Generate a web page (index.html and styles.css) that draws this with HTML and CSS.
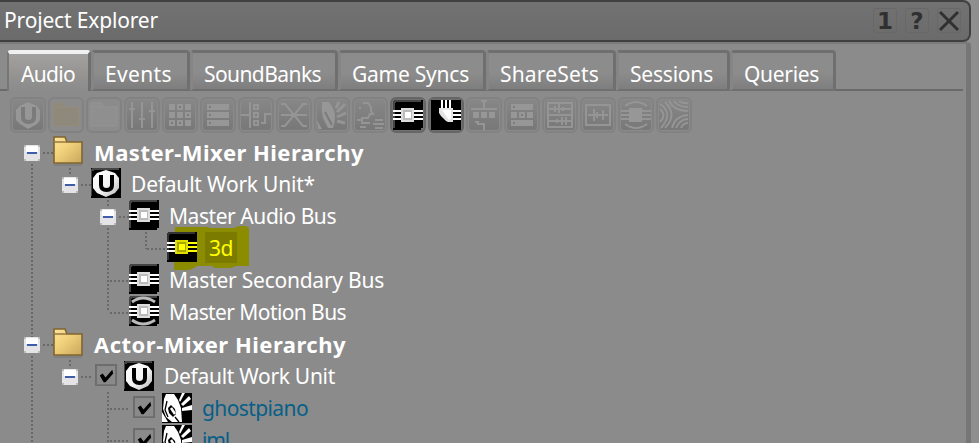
FILE: index.html
```html
<!DOCTYPE html>
<html lang="en">
<head>
<meta charset="utf-8">
<title>Project Explorer</title>
<link rel="stylesheet" href="styles.css">
</head>
<body>
<svg class="defs" width="0" height="0">
  <defs>
    <linearGradient id="gold" x1="0" y1="0" x2="1" y2="1"><stop offset="0" stop-color="#fbe39b"/><stop offset=".4" stop-color="#f3d27d"/><stop offset="1" stop-color="#c7a75c"/></linearGradient>
    <linearGradient id="shield" x1="0" y1="0" x2="1" y2="1"><stop offset="0" stop-color="#fff"/><stop offset=".55" stop-color="#f4f4f4"/><stop offset="1" stop-color="#b5b5b5"/></linearGradient>
  </defs>
  <symbol id="folder" viewBox="0 0 30 30"><path d="M1 27V1h11l2 5h15v21z" fill="url(#gold)" stroke="#80642f" stroke-width="1.6"/><path d="M2 6h12" stroke="#8d713a" stroke-width="1.4"/><path d="M1 29h28" stroke="#777" stroke-width="1"/></symbol>
  <symbol id="unit" viewBox="0 0 30 30"><path d="M0 0h30v30H0z" fill="#000"/><path d="M0 28V2h2V1h26" fill="none" stroke="#444" stroke-width="2"/><path d="M15 2l9 3 4 5v10l-4 5-9 4-9-4-4-5V10l4-5z" fill="url(#shield)"/><path d="M10 7v10q0 5 5.500 5t5.500-5V7" fill="none" stroke="#000" stroke-width="4"/></symbol>
  <symbol id="bus" viewBox="0 0 30 30"><path d="M0 2h2V0h28v28h-2v2H0z" fill="#000"/><path d="M1 28V2h1V1h26" fill="none" stroke="#444" stroke-width="2"/><path d="M0 11h30M0 15h30M0 19h30" stroke="#fff" stroke-width="2"/><path d="M8 8h13v14H8z" fill="#ddd"/><path d="M10 10h9v10h-9z" fill="#bbb"/><path d="M12 12h6v6h-6z" fill="#fff"/></symbol>
  <symbol id="bus-lit" viewBox="0 0 30 30"><path d="M0 2h2V0h28v30H0z" fill="#000"/><path d="M1 28V2h1V1h26" fill="none" stroke="#333" stroke-width="2"/><path d="M0 11h8M0 15h8M0 19h8" stroke="#fff" stroke-width="2"/><path d="M20 11h10M20 15h10M20 19h10" stroke="#ff0" stroke-width="2"/><path d="M8 8h13v14H8z" fill="#e0e000"/><path d="M10 10h9v10h-9z" fill="#a8a800"/><path d="M12 12h6v6h-6z" fill="#ff0"/></symbol>
  <symbol id="motion" viewBox="0 0 30 30"><use href="#bus"/><path d="M3 6q11-8 23 0M3 24q11 8 23 0" fill="none" stroke="#bbb" stroke-width="2.800"/></symbol>
  <symbol id="sound" viewBox="0 0 30 30"><path d="M0 0h30v30H0z" fill="#000"/><path d="M4 1h8l4 6 3 8 1 14H10L4 24 1 16 2 6z" fill="#fff"/><path d="M6 15l3-3 4 4 1 5-3 3-4-4z" fill="#000"/><path d="M9 15l4 6" stroke="#fff" stroke-width="2.500"/><path d="M5 8l-2 9 3 7M13 24l4 5" stroke="#000" stroke-width="1.300" fill="none"/><path d="M17 7l3-7h3l-5 9zM19 11l8-8 2 3-8 7zM20 15l10-3v5l-10 1z" fill="#fff"/><path d="M0 19l6 10H0z" fill="#fff"/></symbol>
  <symbol id="plug" viewBox="0 0 30 30"><path d="M0 0h30v30H0z" fill="#000"/><path d="M11 0v8M15 0v8M19 0v8M20 11h10M20 15h10M20 19h10" stroke="#fff" stroke-width="2"/><path d="M8 8h14v14h-5l-2-1-3-3-2-2-2-3z" fill="#e4e4e4"/><path d="M11 10h9v8l-2 2z" fill="#fff"/></symbol>
  <symbol id="check" viewBox="0 0 24 24"><path d="M1 1h21v21H1z" fill="#8a8a8a" stroke="#6d6d6d" stroke-width="2"/><path d="M5 12l3-2 3 4 7-8 1 4-8 9H9z" fill="#000"/></symbol>
  <symbol id="minus" viewBox="0 0 18 18"><path d="M1 1h16v16H1z" fill="#e4e4e7"/><path d="M1 1h2v2H1zM15 1h2v2h-2zM1 15h2v2H1zM15 15h2v2h-2z" fill="#b9b9b9"/><path d="M3 2h12v6H3z" fill="#fff"/><path d="M4 9h10" stroke="#3f5ca8" stroke-width="2"/></symbol>
</svg>

<header class="titlebar">
  <h1 data-width="153">Project Explorer</h1>
  <div class="controls">
    <span class="control">1</span>
    <span class="control">?</span>
    <span class="control"><svg width="22" height="22" viewBox="0 0 22 22"><path d="M2 2l18 18M20 2L2 20" stroke="#303030" stroke-width="3"/></svg></span>
  </div>
</header>

<main class="panel">
  <nav class="tabs">
    <span class="tab audio active"><b data-width="53">Audio</b></span>
    <span class="tab events"><b data-width="66">Events</b></span>
    <span class="tab banks"><b data-width="116">SoundBanks</b></span>
    <span class="tab syncs"><b data-width="116">Game Syncs</b></span>
    <span class="tab sets"><b data-width="98">ShareSets</b></span>
    <span class="tab sessions"><b data-width="82">Sessions</b></span>
    <span class="tab queries"><b data-width="74">Queries</b></span>
  </nav>

  <div class="toolbar">
    <span class="tool"><svg viewBox="0 0 30 30"><path class="f" d="M15 2l9 4 3 4v10l-3 4-9 5-8-5-4-4V10l4-4z"/><path class="cut" d="M10 7v10q0 5 5.500 5t5.500-5V7" stroke-width="4"/></svg></span>
    <span class="tool bare tan"><svg viewBox="0 0 30 30"><path d="M2 26V3h10l2 4h14v19z"/><path d="M2 7h12"/></svg></span>
    <span class="tool bare"><svg viewBox="0 0 30 30"><path d="M2 26V3h10l2 4h14v19z"/><path d="M2 7h12"/></svg></span>
    <span class="tool"><svg viewBox="0 0 30 30"><path d="M5 2v26M15 2v26M25 2v26M2 9h6M12 19h6M22 11h6"/></svg></span>
    <span class="tool"><svg viewBox="0 0 30 30"><path class="f" d="M4 4h6v6H4zM12 4h6v6h-6zM20 4h6v6h-6zM4 12h6v6H4zM12 12h6v6h-6zM20 12h6v6h-6zM4 20h6v6H4zM12 20h6v6h-6zM20 20h6v6h-6z"/><path class="cut" d="M14 7h2M22 15h2M6 23h2M14 23h2"/></svg></span>
    <span class="tool"><svg viewBox="0 0 30 30"><path class="f" d="M4 4h22v6H4zM4 12h22v6H4zM4 20h22v6H4z"/><path class="cut" d="M6 7h2M6 15h2M6 23h2"/></svg></span>
    <span class="tool"><svg viewBox="0 0 30 30"><path d="M9 2v26M0 15h9M13 5h4v4h-4zM13 13h4v4h-4zM13 21h4v4h-4zM20 23h4v-9h6"/></svg></span>
    <span class="tool"><svg viewBox="0 0 30 30"><path d="M2 4h4l18 22h4M2 26h4L24 4h4M2 15h26"/></svg></span>
    <span class="tool"><svg viewBox="0 0 30 30"><path class="f" d="M5 2h7q6 8 6 14 0 7-2 12h-5L6 18q-2-8-1-16zM0 20l5 9H1z"/><path class="cut" d="M8 12l7 13"/><path d="M19 8l3-6M20 12l8-8M20 17l9-4M20 21l8 2" stroke-width="3"/></svg></span>
    <span class="tool"><svg viewBox="0 0 30 30"><path d="M4 8h2M8 3h5l3 4v4l2 3h-3l-2 4H6M2 20h5v3h8M5 27h6M20 20h8M18 24h11M20 28h8"/></svg></span>
    <span class="tool on"><svg viewBox="0 0 30 30"><use href="#bus"/></svg></span>
    <span class="tool on"><svg viewBox="0 0 30 30"><use href="#plug"/></svg></span>
    <span class="tool"><svg viewBox="0 0 30 30"><path d="M12 1h6M15 0v9M2 9h26M6 22h3v2h6v6"/><path class="f" d="M4 12h6v6H4zM12 12h6v6h-6zM20 12h6v6h-6z"/></svg></span>
    <span class="tool"><svg viewBox="0 0 30 30"><path class="f" d="M4 4h22v6H4zM4 12h6v6H4zM12 12h6v6h-6zM20 12h6v6h-6zM4 20h22v6H4z"/><path class="cut" d="M6 7h2M14 15h2M6 23h2"/></svg></span>
    <span class="tool"><svg viewBox="0 0 30 30"><path d="M3 3h24v24H3zM3 15h24M3 9h24M3 21h24M10 6v6M14 4v9M18 7v4M12 19v4M17 17v8M21 17v8"/></svg></span>
    <span class="tool"><svg viewBox="0 0 30 30"><path d="M3 5h24v20H3zM5 15h20M11 9v12M14 12v6M20 10v10"/></svg></span>
    <span class="tool"><svg viewBox="0 0 30 30"><path d="M0 11h30M0 15h30M0 19h30M4 6q11-8 22 0M4 24q11 8 22 0"/><path class="f" d="M8 8h13v14H8z"/></svg></span>
    <span class="tool"><svg viewBox="0 0 30 30"><path d="M1 9q7 6 0 13M1 4q14 9 1 24M6 2q13 13 0 26M10 1q5 10 19 10M15 1q4 6 14 6M20 1q4 3 9 2M13 28q3-12 16-13M17 28q4-9 12-9M22 28q2-5 7-5"/></svg></span>
  </div>

  <section class="tree">
    <svg class="guides" width="220" height="307" viewBox="0 136 220 307">
      <path d="M32 164v173M32 356v87M43 153h10M70 168v8M81 185h10M108 200v8M119 217h10M108 228v84M110 281h19M110 313h19M146 232v17M147 249h20M43 345h10M70 360v8M81 377h12M108 392v51M110 409h20M110 441h20"/>
    </svg>
    <div class="row group"><svg class="minus"><use href="#minus"/></svg><svg class="icon"><use href="#folder"/></svg><span class="label" data-width="269">Master-Mixer Hierarchy</span></div>
    <div class="row l1"><svg class="minus"><use href="#minus"/></svg><svg class="icon"><use href="#unit"/></svg><span class="label" data-width="183">Default Work Unit*</span></div>
    <div class="row l2"><svg class="minus"><use href="#minus"/></svg><svg class="icon"><use href="#bus"/></svg><span class="label" data-width="166">Master Audio Bus</span></div>
    <div class="row l3 marked"><svg class="marker" width="80" height="46" viewBox="0 0 80 46"><path d="M4 2h34v1h25l5-2h7l3 2v38H65l-5 2H44l-3-2H26q-6 5-14 4H3z" fill="#8c8c00"/></svg><svg class="icon"><use href="#bus-lit"/></svg><span class="label" data-width="23">3d</span></div>
    <div class="row leaf"><svg class="icon"><use href="#bus"/></svg><span class="label" data-width="214">Master Secondary Bus</span></div>
    <div class="row leaf"><svg class="icon"><use href="#motion"/></svg><span class="label" data-width="176">Master Motion Bus</span></div>
    <div class="row group"><svg class="minus"><use href="#minus"/></svg><svg class="icon"><use href="#folder"/></svg><span class="label" data-width="251">Actor-Mixer Hierarchy</span></div>
    <div class="row l1 checked"><svg class="minus"><use href="#minus"/></svg><svg class="check"><use href="#check"/></svg><svg class="icon"><use href="#unit"/></svg><span class="label" data-width="170">Default Work Unit</span></div>
    <div class="row sound"><svg class="check"><use href="#check"/></svg><svg class="icon"><use href="#sound"/></svg><span class="label" data-width="105">ghostpiano</span></div>
    <div class="row sound"><svg class="check"><use href="#check"/></svg><svg class="icon"><use href="#sound"/></svg><span class="label" data-width="26">iml</span></div>
  </section>
</main>
<script src="fit.js"></script>
</body>
</html>
```
FILE: styles.css
```css
* { box-sizing: border-box; }
body {
  margin: 0;
  width: 979px;
  height: 443px;
  overflow: hidden;
  background: #8f8f8f;
  color: #fff;
  font: 21px/32px "Noto Sans", "DejaVu Sans", sans-serif;
}
.defs { position: absolute; }
svg { display: block; flex: none; }

.titlebar {
  display: flex;
  justify-content: space-between;
  width: 971px;
  height: 42px;
  padding: 2px 8px 0 4px;
  background: linear-gradient(#727272, #6b6b6b);
  border: solid #404040;
  border-width: 2px 2px 2px 0;
  border-radius: 0 8px 8px 0;
}
.titlebar h1 { margin: 0; font-size: inherit; font-weight: 400; white-space: nowrap; }
.controls { display: flex; gap: 8px; padding-top: 4px; }
.control {
  display: grid;
  place-items: center;
  width: 24px;
  height: 25px;
  border: 1px solid #686868;
  border-radius: 3px;
  color: #303030;
  font: bold 23px/24px "DejaVu Sans", sans-serif;
}

.panel {
  width: 971px;
  height: 401px;
  background: #8b8b8b;
  border: solid #7b7b7b;
  border-width: 2px 5px 0 0;
  border-right-color: #767676;
  border-top-right-radius: 4px;
}
.tabs {
  display: flex;
  height: 47px;
  width: 963px;
  padding: 6px 0 0 7px;
  background: linear-gradient(#6a6a6a, #6a6a6a) 0 100% / 100% 2px no-repeat;
}
.tab {
  height: 41px;
  padding: 5px 0 0 11px;
  background: linear-gradient(#8c8c8c 0, #8c8c8c 55%, #7e7e7e);
  border: solid #6f6f6f;
  border-width: 3px 3px 2px 0;
  border-left: 3px solid #858585;
  border-radius: 4px 4px 0 0;
  white-space: nowrap;
}
.tab b { display: block; font-weight: 400; }
.audio { width: 84px; }
.events { width: 99px; }
.banks { width: 148px; }
.syncs { width: 148px; }
.sets { width: 130px; }
.sessions { width: 114px; }
.queries { width: 106px; }
.tab.active {
  background: linear-gradient(#a3a19f, #949392 60%, #8b8b8b);
  border-top: 4px solid #f0f0f0;
  border-bottom-width: 0;
  border-left: 2px solid #777;
  padding: 4px 0 0 12px;
}

.toolbar { display: flex; gap: 2px; padding: 6px 0 0 10px; height: 45px; }
.tool {
  width: 36px;
  height: 36px;
  border: 2px solid #828282;
  border-radius: 6px;
  padding: 1px;
  background: linear-gradient(#878787, #777777);
  background-clip: content-box;
}
.tool svg { width: 30px; height: 30px; fill: none; stroke: #959595; stroke-width: 2; }
.tool .f { fill: #979797; stroke: none; }
.tool .cut { fill: none; stroke: #7b7b7b; }
.tool.bare { background: none; }
.tool.bare svg { fill: #8f8f8f; stroke: #949494; stroke-width: 1; }
.tool.tan svg { fill: #8f897b; stroke: #928d80; }
.tool.on { border-color: #666; background: #707070; }
.tool.on svg { stroke: none; }

.tree { position: relative; }
.guides { position: absolute; left: 0; top: 0; fill: none; stroke: #686868; stroke-width: 2; stroke-dasharray: 2 2; }
.row {
  position: relative;
  display: flex;
  height: 32px;
  padding-left: 129px;
  white-space: nowrap;
}
.icon { width: 30px; height: 30px; }
.minus { width: 18px; height: 18px; margin: 8px 12px 0 0; }
.check { width: 23px; height: 23px; margin: 4px 7px 0 0; }
.label { margin-left: 10px; }
.row.group { padding-left: 23px; font-weight: 700; font-size: 22px; }
.group .label { margin-left: 11px; }
.row.l1 { padding-left: 61px; }
.row.l2 { padding-left: 99px; }
.row.l3 { padding-left: 167px; }
.row.checked .minus { margin-right: 16px; }
.checked .icon { margin-left: -1px; }
.row.checked .icon, .row.sound .icon { margin-top: 1px; }
.row.sound { padding-left: 133px; color: #075f88; }
.row.sound .icon { margin-left: -1px; }
.marker { position: absolute; left: 171px; top: -7px; }
.marked .icon, .marked .label { position: relative; }
.marked .label {
  margin: 0 0 0 8px;
  height: 31px;
  width: 32px;
  padding-left: 4px;
  background: #7b7b00;
  color: #ff0;
}
```
FILE: fit.js
```js
// Track each label so that it fills its designed width.
document.querySelectorAll('[data-width]').forEach(function (el) {
  var range = document.createRange();
  range.selectNodeContents(el);
  var natural = range.getBoundingClientRect().width;
  el.style.letterSpacing = (el.dataset.width - natural + 1) / el.textContent.length + 'px';
});
```
